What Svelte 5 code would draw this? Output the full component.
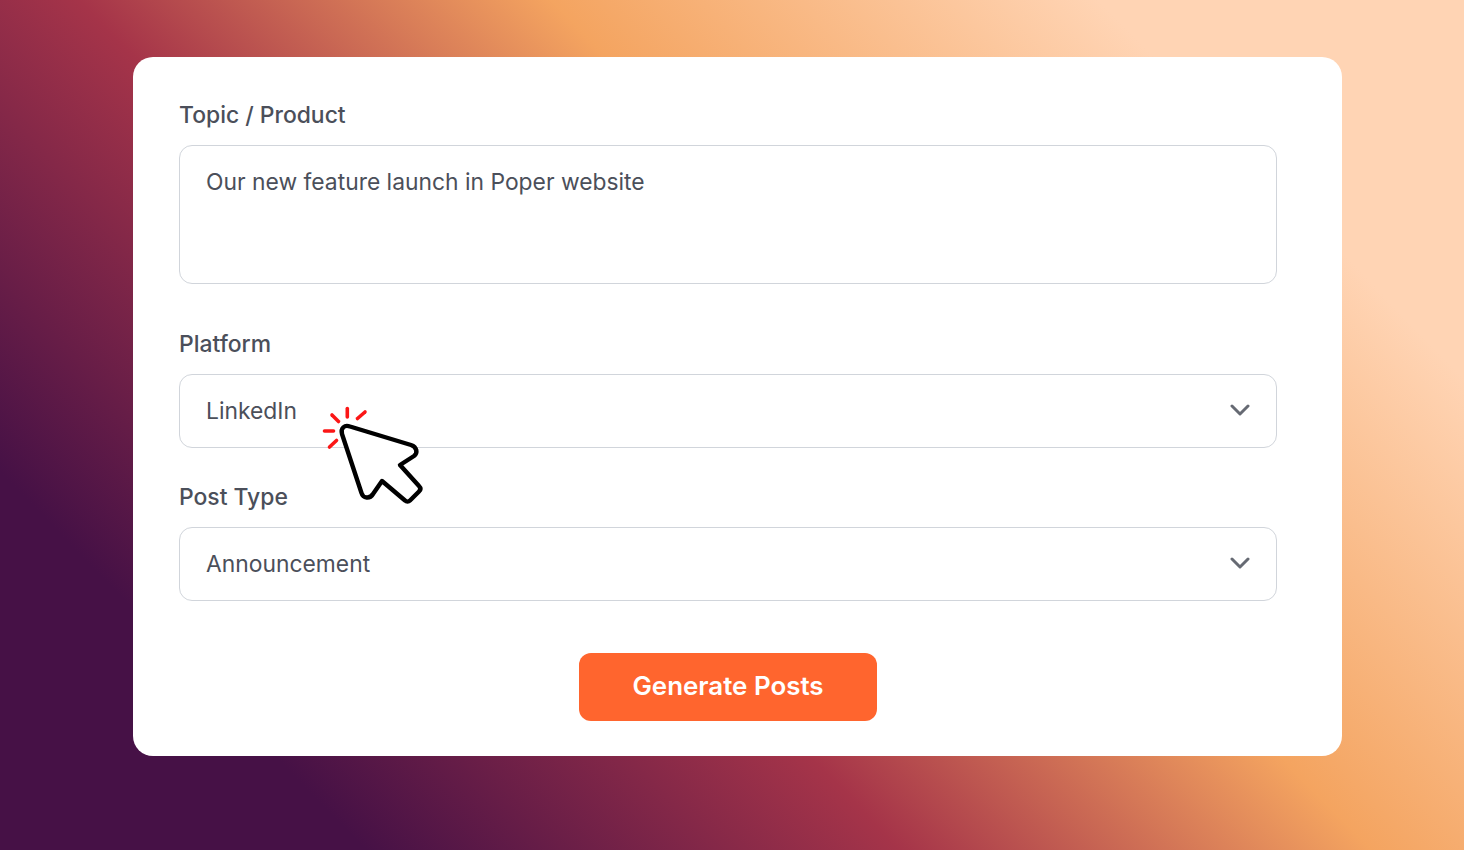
<script>
  const fields = [
    { label: 'Platform', value: 'LinkedIn' },
    { label: 'Post Type', value: 'Announcement' }
  ];
</script>

<main class="page">
  <form class="card">
    <label class="label" for="topic">Topic / Product</label>
    <div class="area" id="topic">Our new feature launch in Poper website</div>

    {#each fields as f, i}
      <div class="label label-sel" class:first={i === 0}>{f.label}</div>
      <div class="select">
        <span>{f.value}</span>
        <svg class="chev" width="20" height="12" viewBox="0 0 20 12" fill="none">
          <path d="M2 2l8 8 8-8" stroke="#666a73" stroke-width="3" stroke-linecap="round" stroke-linejoin="round" />
        </svg>
      </div>
    {/each}

    <div class="actions"><button type="button" class="btn">Generate Posts</button></div>
  </form>

  <svg class="cursor" width="140" height="125" viewBox="0 0 140 125" fill="none">
    <g stroke="#fb1616" stroke-width="3.6" stroke-linecap="round">
      <path d="M47.300 18.500v8.500" />
      <path d="M32 25l6.500 6.500" />
      <path d="M65 22l-7.500 6.500" />
      <path d="M24.500 41h9" />
      <path d="M36.500 50.500l-7 6.500" />
    </g>
    <path
      d="M50 36.500L111 55C117 57 118 63 114 66L100 75L119 96C121 98 120.500 100 119 101.500L110 110.500C108.500 112 106.500 112 105 110.500L82 91L73 104C70 109 63 108.500 61.500 103L42 44C40.500 38 44.500 34.500 50 36.500Z"
      fill="#fff" stroke="#000" stroke-width="4.400" stroke-linejoin="round"
    />
  </svg>
</main>

<style>
  :global(body) {
    margin: 0;
  }
  .page {
    position: relative;
    box-sizing: border-box;
    width: 1464px;
    height: 850px;
    overflow: hidden;
    padding: 57px 122px 94px 133px;
    font-family: Inter, "Liberation Sans", sans-serif;
    background: linear-gradient(46deg, #461146 0%, #461146 16%, #a53449 39.400%, #f4a460 60%, #ffd4b4 84%, #ffd4b4 100%);
  }
  .card {
    box-sizing: border-box;
    height: 699px;
    background: #fff;
    border-radius: 20px;
    padding: 43px 65px 0 46px;
  }
  .label {
    display: block;
    font-size: 22.900px;
    line-height: 30px;
    font-weight: 500;
    color: #4b4f5a;
    margin-bottom: 15px;
  }
  .label-sel {
    margin-top: 34px;
    margin-bottom: 15px;
  }
  .label-sel.first {
    margin-top: 45px;
  }
  .area,
  .select {
    box-sizing: border-box;
    border: 1px solid #d1d5db;
    border-radius: 13px;
    font-size: 22.850px;
    color: #4b4f5a;
    padding-left: 26px;
    padding-right: 26px;
  }
  .area {
    height: 139px;
    padding-top: 21px;
    line-height: 30px;
  }
  .select {
    height: 74px;
    display: flex;
    align-items: center;
    justify-content: space-between;
  }
  .select span {
    margin-bottom: 1px;
  }
  .chev {
    display: block;
    margin-bottom: 2px;
  }
  .actions {
    display: flex;
    justify-content: center;
    margin-top: 52px;
  }
  .btn {
    width: 298px;
    height: 68px;
    border: 0;
    border-radius: 12px;
    background: #ff652e;
    color: #fff;
    font-family: inherit;
    font-size: 25.900px;
    font-weight: 600;
    padding: 0 0 3px;
  }
  .cursor {
    position: absolute;
    left: 300px;
    top: 390px;
  }
</style>
